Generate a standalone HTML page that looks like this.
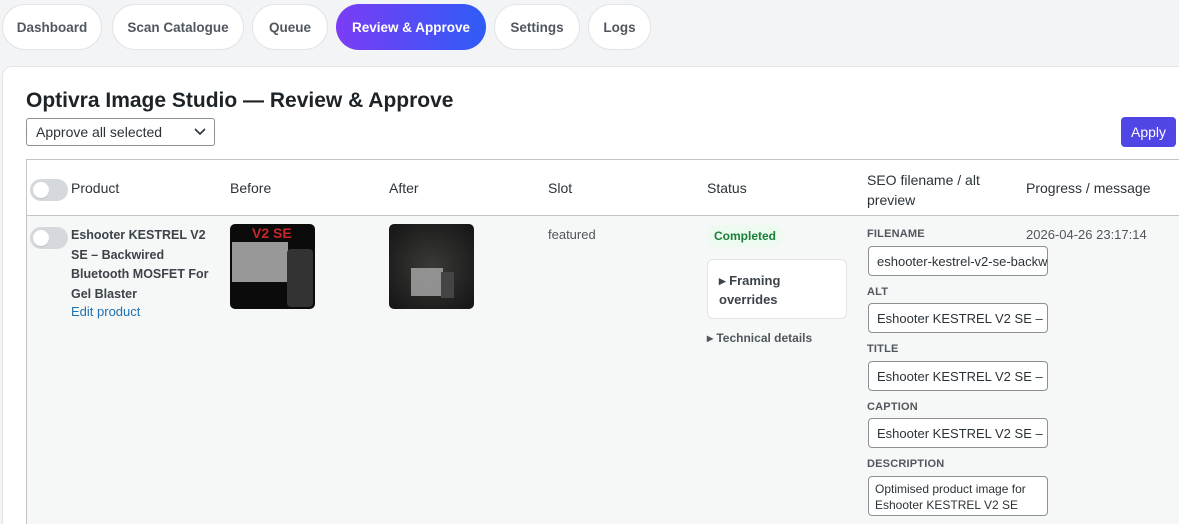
<!DOCTYPE html>
<html><head><meta charset="utf-8"><style>
*{box-sizing:border-box;margin:0;padding:0}
html,body{width:1179px;height:524px;overflow:hidden}
body{background:#f3f4f6;font-family:"Liberation Sans",sans-serif;color:#1d2327;position:relative;font-size:13px}
.a{position:absolute}
.tab{position:absolute;top:4px;height:46px;border-radius:23px;background:#fff;border:1px solid #e2e4e7;color:#50575e;font-size:13.5px;font-weight:bold;display:flex;align-items:center;justify-content:center}
.tab.on{background:linear-gradient(90deg,#7b3cf5,#2f5cf6);color:#fff;border:none}
.card{left:2px;top:66px;width:1177px;height:458px;background:#fff;border:1px solid #e2e4e7;border-bottom:none;border-right:none;border-radius:10px 0 0 0}
.sel{left:26px;top:118px;width:189px;height:28px;border:1px solid #8c8f94;border-radius:3px;background:#fff;font-size:14px;padding:5px 9px;color:#2c3338}
.tbl{left:26px;top:159px;width:1153px;height:365px;border:1px solid #c3c4c7;border-bottom:none;border-right:none;background:#f6f7f7}
.hd{left:27px;top:160px;width:1152px;height:56px;background:#fff;border-bottom:1px solid #c3c4c7}
.th{position:absolute;font-size:14px;color:#2c3338}
.tg{position:absolute;width:38px;height:22px;border-radius:11px;background:#d5d8dc}
.tg:after{content:"";position:absolute;left:3px;top:3px;width:16px;height:16px;border-radius:50%;background:#fff;box-shadow:0 1px 1px rgba(0,0,0,.1)}
.lbl{position:absolute;left:867px;font-size:11px;color:#50575e;font-weight:bold;letter-spacing:.2px}
.inp{position:absolute;left:868px;width:180px;height:30px;border:1px solid #8c8f94;border-radius:4px;background:#fff;font-size:13px;padding:7px 8px;white-space:nowrap;overflow:hidden;color:#2c3338}
</style></head><body>
<div class="tab" style="left:2px;width:100px">Dashboard</div>
<div class="tab" style="left:112px;width:132px">Scan Catalogue</div>
<div class="tab" style="left:252px;width:76px">Queue</div>
<div class="tab on" style="left:336px;width:150px">Review &amp; Approve</div>
<div class="tab" style="left:494px;width:86px">Settings</div>
<div class="tab" style="left:588px;width:63px">Logs</div>
<div class="a card"></div>
<div class="a" style="left:26px;top:89px;font-size:21px;font-weight:bold;color:#1d2327">Optivra Image Studio — Review &amp; Approve</div>
<div class="a sel">Approve all selected<svg class="a" style="right:8px;top:9px" width="12" height="8" viewBox="0 0 12 8"><path d="M1 1l5 5 5-5" fill="none" stroke="#2c3338" stroke-width="1.6"/></svg></div>
<div class="a" style="left:1121px;top:117px;width:55px;height:30px;background:#4f46e5;border-radius:4px;color:#fff;font-size:14px;text-align:center;line-height:30px">Apply</div>
<div class="a tbl"></div>
<div class="a hd"></div>
<div class="tg" style="left:30px;top:179px"></div>
<div class="th" style="left:71px;top:180px">Product</div>
<div class="th" style="left:230px;top:180px">Before</div>
<div class="th" style="left:389px;top:180px">After</div>
<div class="th" style="left:548px;top:180px">Slot</div>
<div class="th" style="left:707px;top:180px">Status</div>
<div class="th" style="left:867px;top:170px;line-height:20px">SEO filename / alt<br>preview</div>
<div class="th" style="left:1026px;top:180px">Progress / message</div>
<div class="tg" style="left:30px;top:227px"></div>
<div class="a" style="left:71px;top:226px;width:140px;font-size:12.5px;font-weight:bold;color:#3c434a;line-height:19.5px">Eshooter KESTREL V2 SE – Backwired Bluetooth MOSFET For Gel Blaster</div>
<div class="a" style="left:71px;top:304px;color:#2271b1;font-size:13px">Edit product</div>
<div class="a" style="left:230px;top:224px;width:85px;height:85px;border-radius:5px;background:#0b0b0b;overflow:hidden">
<div class="a" style="left:22px;top:1px;color:#c8262a;font-weight:bold;font-size:14px">V2 SE</div>
<div class="a" style="left:2px;top:18px;width:56px;height:40px;background:#bbb;opacity:.8"></div>
<div class="a" style="left:57px;top:25px;width:26px;height:58px;background:#333;border-radius:4px"></div>
</div>
<div class="a" style="left:389px;top:224px;width:85px;height:85px;border-radius:5px;background:radial-gradient(#3a3a38,#141414);overflow:hidden">
<div class="a" style="left:22px;top:44px;width:32px;height:28px;background:#aaa;opacity:.8"></div>
<div class="a" style="left:52px;top:48px;width:13px;height:26px;background:#444"></div>
</div>
<div class="a" style="left:548px;top:227px;color:#50575e">featured</div>
<div class="a" style="left:707px;top:225px;background:#edfaef;color:#1a7f37;font-size:12px;font-weight:bold;padding:4px 7px;border-radius:10px">Completed</div>
<div class="a" style="left:707px;top:259px;width:140px;height:60px;background:#fff;border:1px solid #e2e4e7;border-radius:6px;padding:11px 11px;font-weight:bold;font-size:13px;color:#3c434a;line-height:19px">▸ Framing<br>overrides</div>
<div class="a" style="left:707px;top:331px;font-size:12px;font-weight:bold;color:#50575e">▸ Technical details</div>
<div class="lbl" style="top:228px">FILENAME</div>
<div class="inp" style="top:246px">eshooter-kestrel-v2-se-backwired</div>
<div class="lbl" style="top:286px">ALT</div>
<div class="inp" style="top:303px">Eshooter KESTREL V2 SE – Backwired</div>
<div class="lbl" style="top:343px">TITLE</div>
<div class="inp" style="top:361px">Eshooter KESTREL V2 SE – Backwired</div>
<div class="lbl" style="top:401px">CAPTION</div>
<div class="inp" style="top:418px">Eshooter KESTREL V2 SE – Backwired</div>
<div class="lbl" style="top:458px">DESCRIPTION</div>
<div class="inp" style="top:476px;height:40px;width:180px;padding:4px 6px;line-height:16px;font-size:12px;white-space:normal">Optimised product image for Eshooter KESTREL V2 SE</div>
<div class="a" style="left:1026px;top:227px;color:#50575e;font-size:13px">2026-04-26 23:17:14</div>
</body></html>
